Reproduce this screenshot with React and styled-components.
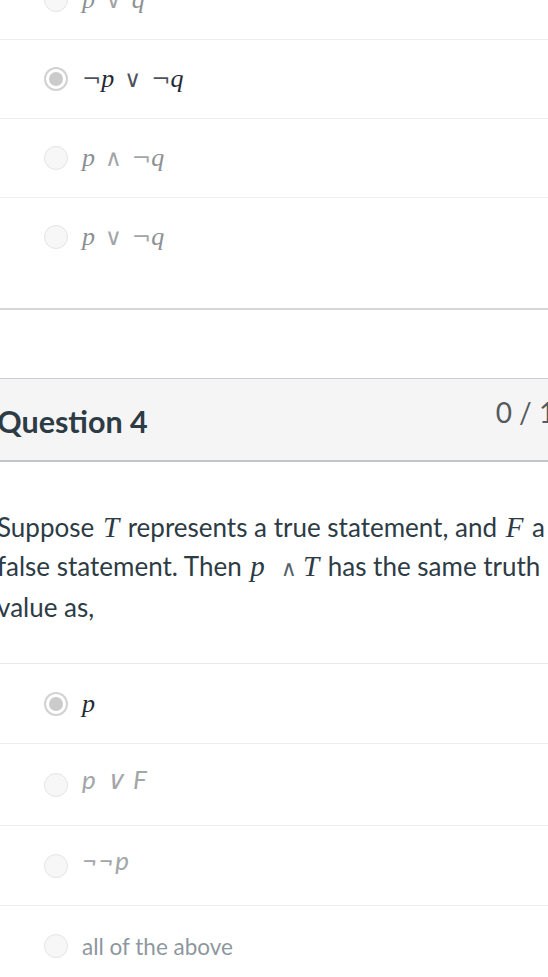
import React from 'react';
import styled, { createGlobalStyle } from 'styled-components';

const GlobalStyle = createGlobalStyle`
  html, body {
    margin: 0;
    padding: 0;
    background: #fff;
    overflow: hidden;
  }
  body {
    font-family: Lato, "Open Sans", sans-serif;
    color: #2d3b45;
  }
`;

const Page = styled.div`
  margin-top: -39px;
  margin-left: -3px;
  width: 620px;
`;

const AnswerList = styled.div`
  padding-bottom: ${p => (p.$closed ? '32px' : '0')};
  border-bottom: ${p => (p.$closed ? '2px solid #d4d6d8' : 'none')};
  border-top: ${p => (p.$top ? '1px solid #e6e8ea' : 'none')};
`;

const Answer = styled.div`
  display: flex;
  align-items: center;
  gap: 14px;
  height: ${p => p.$h || 78}px;
  padding-left: 47px;
  & + & {
    border-top: 1px solid #eceeef;
  }
`;

const Radio = styled.span`
  flex: none;
  box-sizing: border-box;
  width: 24px;
  height: 24px;
  border-radius: 50%;
  border: ${p => (p.$checked ? '2px solid #d2d2d2' : '1px solid #e4e4e4')};
  background: ${p => (p.$checked ? '#fff' : '#f7f7f7')};
  display: flex;
  align-items: center;
  justify-content: center;
  &::after {
    content: '';
    display: ${p => (p.$checked ? 'block' : 'none')};
    width: 14px;
    height: 14px;
    border-radius: 50%;
    background: #cbcbcb;
  }
`;

const MathText = styled.span`
  font-family: "Liberation Serif", "DejaVu Serif", serif;
  font-size: 26px;
  color: ${p => (p.$dim ? '#8c9094' : '#1f2a33')};
  white-space: nowrap;
`;

const Var = styled.i`
  font-style: italic;
`;

const Op = styled.span`
  font-family: "DejaVu Serif", serif;
  font-size: 23px;
  opacity: 0.8;
  margin: 0 ${p => p.$space || 0}px;
`;

const PlainMath = styled.span`
  font-family: Lato, sans-serif;
  font-style: italic;
  font-size: 26px;
  color: #a3a6a9;
  letter-spacing: 1.5px;
  white-space: nowrap;
  transform: translateY(-6px);
`;

const AnswerLabel = styled.span`
  font-family: Lato, sans-serif;
  font-size: 22.5px;
  color: #8e979e;
`;

const Gap = styled.div`
  height: 68px;
`;

const QuestionHeader = styled.div`
  display: flex;
  align-items: center;
  justify-content: space-between;
  height: 81px;
  background: #f5f5f5;
  border-top: 1px solid #c9cdd1;
  border-bottom: 2px solid #c2c5c8;
`;

const QuestionTitle = styled.h2`
  margin: 0;
  font-family: Lato, sans-serif;
  font-weight: 700;
  font-size: 30.5px;
  color: #2d3b45;
  transform: translateY(1px);
`;

const Points = styled.span`
  font-family: Lato, sans-serif;
  font-size: 28px;
  color: #555a5e;
  margin-right: 17px;
  transform: translateY(-8px);
`;

const QuestionBody = styled.div`
  padding: 46px 37px 36px 0;
  font-family: Lato, sans-serif;
  font-size: 26px;
  line-height: 39px;
  color: #2d3b45;
`;

const InlineVar = styled.i`
  font-family: "Liberation Serif", "DejaVu Serif", serif;
  font-size: 29px;
  margin: 0 2px;
`;

const InlineOp = styled.span`
  font-family: "DejaVu Serif", serif;
  font-size: 22px;
  opacity: 0.8;
  margin: 0 4px 0 14px;
`;

const upper = [
  { key: 'a', checked: false, dim: true, parts: [['v', 'p'], ['op', '∨', 10], ['v', 'q']] },
  { key: 'b', checked: true, dim: false, parts: [['op', '¬'], ['v', 'p'], ['op', '∨', 10], ['op', '¬'], ['v', 'q']] },
  { key: 'c', checked: false, dim: true, parts: [['v', 'p'], ['op', '∧', 10], ['op', '¬'], ['v', 'q']] },
  { key: 'd', checked: false, dim: true, parts: [['v', 'p'], ['op', '∨', 10], ['op', '¬'], ['v', 'q']] },
];

function Formula({ parts, dim }) {
  return (
    <MathText $dim={dim}>
      {parts.map(([kind, text, space], i) =>
        kind === 'v' ? (
          <Var key={i}>{text}</Var>
        ) : (
          <Op key={i} $space={space}>
            {text}
          </Op>
        )
      )}
    </MathText>
  );
}

export default function App() {
  return (
    <>
      <GlobalStyle />
      <Page>
        <AnswerList $closed>
          {upper.map(a => (
            <Answer key={a.key}>
              <Radio $checked={a.checked} />
              <Formula parts={a.parts} dim={a.dim} />
            </Answer>
          ))}
        </AnswerList>

        <Gap />

        <QuestionHeader>
          <QuestionTitle>Question 4</QuestionTitle>
          <Points>0 / 1 pts</Points>
        </QuestionHeader>

        <QuestionBody>
          Suppose <InlineVar>T</InlineVar> represents a true statement, and <InlineVar>F</InlineVar> a false
          statement. Then <InlineVar>p</InlineVar>
          <InlineOp>∧</InlineOp>
          <InlineVar>T</InlineVar> has the same truth value as,
        </QuestionBody>

        <AnswerList $top>
          <Answer $h={79}>
            <Radio $checked />
            <Formula parts={[['v', 'p']]} />
          </Answer>
          <Answer $h={81}>
            <Radio />
            <PlainMath>p ∨ F</PlainMath>
          </Answer>
          <Answer $h={79}>
            <Radio />
            <PlainMath>¬¬p</PlainMath>
          </Answer>
          <Answer $h={80}>
            <Radio />
            <AnswerLabel>all of the above</AnswerLabel>
          </Answer>
        </AnswerList>
      </Page>
    </>
  );
}
